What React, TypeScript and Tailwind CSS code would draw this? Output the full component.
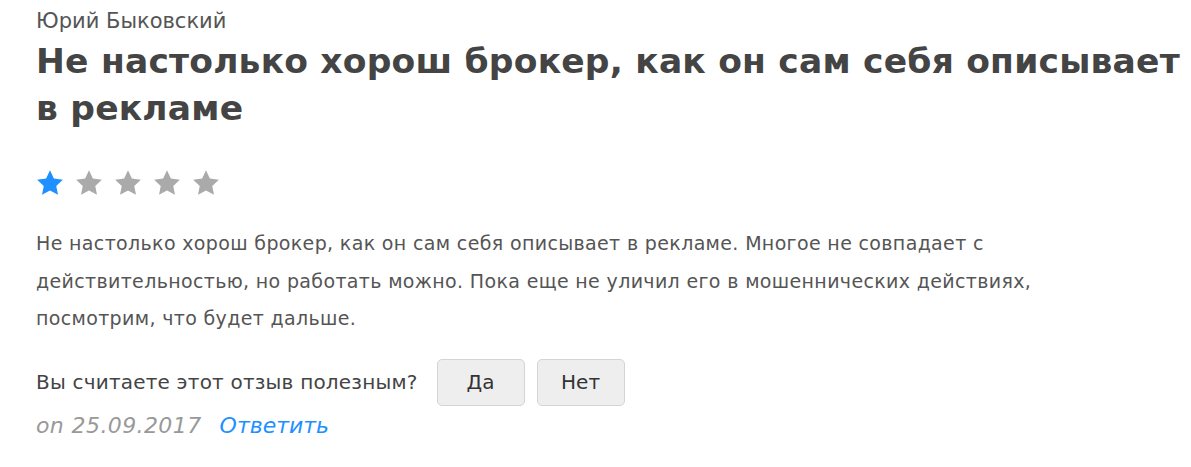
import React from "react";

const Star = ({ color }: { color: string }) => (
  <svg width="30" height="30" viewBox="0 0 24 24" className="block">
    <path
      d="M12 1.8l3.1 6.6 7.2.9-5.3 5 1.4 7.1L12 17.9l-6.4 3.5 1.4-7.1-5.3-5 7.2-.9z"
      fill={color}
    />
  </svg>
);

export default function App() {
  return (
    <div className="bg-white w-[1191px] h-[467px] overflow-hidden pl-[36px] font-['DejaVu_Sans',Verdana,sans-serif]">
      <div className="text-[21px] leading-[26px] text-[#555] pt-[8px]">Юрий Быковский</div>
      <h1 className="w-[1160px] text-[34.5px] tracking-[0.2px] leading-[47px] font-bold text-[#444] mt-[4px]">
        Не настолько хорош брокер, как он сам себя описывает в рекламе
      </h1>
      <div className="flex gap-[9px] mt-[36px] -ml-[1px]">
        <Star color="#1e90ff" />
        <Star color="#aaaaaa" />
        <Star color="#aaaaaa" />
        <Star color="#aaaaaa" />
        <Star color="#aaaaaa" />
      </div>
      <p className="w-[1090px] text-[19px] tracking-[0.35px] leading-[37.5px] text-[#555] mt-[27px]">
        Не настолько хорош брокер, как он сам себя описывает в рекламе. Многое не совпадает с действительностью, но работать можно. Пока еще не уличил его в мошеннических действиях, посмотрим, что будет дальше.
      </p>
      <div className="flex items-center mt-[21px]">
        <span className="text-[20px] tracking-[0.2px] text-[#444] mr-[19px]">Вы считаете этот отзыв полезным?</span>
        <button className="w-[88px] h-[47px] bg-[#eeeeee] border border-[#d4d4d4] rounded-[5px] text-[20px] text-[#333] mr-[12px]">Да</button>
        <button className="w-[88px] h-[47px] bg-[#eeeeee] border border-[#d4d4d4] rounded-[5px] text-[20px] text-[#333]">Нет</button>
      </div>
      <div className="text-[22px] italic mt-[5px] leading-[30px]">
        <span className="text-[#999] tracking-[0.4px]">on 25.09.2017</span>
        <span className="text-[#1e90ff] ml-[18px]">Ответить</span>
      </div>
    </div>
  );
}
